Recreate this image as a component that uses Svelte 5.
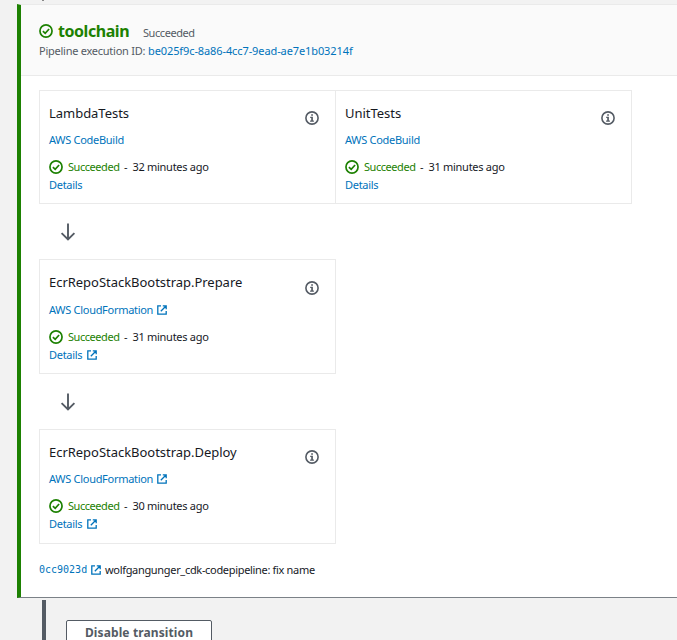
<script>
  const groups = [
    [
      { name: 'LambdaTests', provider: 'AWS CodeBuild', time: '32 minutes ago', external: false },
      { name: 'UnitTests', provider: 'AWS CodeBuild', time: '31 minutes ago', external: false }
    ],
    [{ name: 'EcrRepoStackBootstrap.Prepare', provider: 'AWS CloudFormation', time: '31 minutes ago', external: true, shifted: true }],
    [{ name: 'EcrRepoStackBootstrap.Deploy', provider: 'AWS CloudFormation', time: '30 minutes ago', external: true }]
  ];
</script>

{#snippet check()}
  <svg class="check" viewBox="0 0 14 14" width="14" height="14">
    <circle cx="7" cy="7" r="6.05" />
    <path d="M3.9 7.1 6.2 9.3 10.1 5" />
  </svg>
{/snippet}

{#snippet ext()}
  <svg class="ext" viewBox="0 0 10 10" width="10" height="10">
    <path d="M4 .8H.8v8.4h8.4V6M5.8.8h3.4v3.4M9 1 3.8 6.2" />
  </svg>
{/snippet}

<div class="page">
  <div class="above"><i></i></div>
  <section class="stage">
    <header>
      <div class="heading">
        {@render check()}
        <h1>toolchain</h1>
        <span class="state">Succeeded</span>
      </div>
      <div class="execution">
        <span class="label">Pipeline execution ID:</span>
        <span class="link id">be025f9c-8a86-4cc7-9ead-ae7e1b03214f</span>
      </div>
    </header>
    <div class="body">
      {#each groups as group, i}
        {#if i > 0}
          <div class="arrow">
            <svg viewBox="0 0 16 18" width="16" height="18"><path d="M8 .5v16M1.6 10.1 8 16.4l6.4-6.3" /></svg>
          </div>
        {/if}
        <div class="group" class:later={i > 0}>
          {#each group as action}
            <article class:shifted={action.shifted}>
              <div class="info">
                <h2>{action.name}</h2>
                <div class="row provider"><span class="link">{action.provider}</span>{#if action.external}{@render ext()}{/if}</div>
                <div class="row status">
                  {@render check()}<span class="ok">Succeeded</span><span class="dash">-</span><span class="time">{action.time}</span>
                </div>
                <div class="row details"><span class="link">Details</span>{#if action.external}{@render ext()}{/if}</div>
              </div>
              <svg class="about" viewBox="0 0 14 14" width="14" height="14">
                <circle cx="7" cy="7" r="6.1" />
                <path d="M6.2 3.2h1.7v1.6H6.2zM5.2 5.8h2.7v3.6h1V10.7H5.1V9.4h1.1V7H5.2z" />
              </svg>
            </article>
          {/each}
        </div>
      {/each}
      <div class="commit">
        <span class="hash">0cc9023d</span>{@render ext()}<span class="message">wolfgangunger_cdk-codepipeline: fix name</span>
      </div>
    </div>
  </section>
  <div class="transition">
    <div class="rail"></div>
    <button>Disable transition</button>
  </div>
</div>

<style>
  .page {
    height: 640px;
    overflow: hidden;
    background: #f2f2f2;
    color: #16191f;
    font: 11px/18px "Noto Sans", "Open Sans", sans-serif;
    white-space: nowrap;
  }
  .above { height: 4px; padding-left: 42px; }
  .above i { display: block; width: 2px; height: 1px; background: #888; }
  .stage {
    box-sizing: border-box;
    height: 594px;
    margin-left: 17px;
    border-top: 1px solid #eaeaea;
    border-bottom: 1px solid #7b8187;
    border-left: 4px solid #1d8102;
    background: #fff;
  }
  header {
    box-sizing: border-box;
    height: 71px;
    padding: 15px 18px 0;
    border-bottom: 1px solid #eaeaea;
    background: #fafafa;
  }
  .heading { display: flex; height: 22px; align-items: center; }
  h1 { width: 85px; margin: 0 0 0 5px; color: #1d8102; font-size: 16px; font-weight: 700; line-height: 22px; letter-spacing: -.45px; }
  .state { padding-top: 3px; color: #545b64; letter-spacing: -.43px; }
  .execution { display: flex; color: #545b64; }
  .label { width: 109px; letter-spacing: -.25px; }
  .link { color: #0073bb; }
  .id { letter-spacing: -.1px; }
  .check { flex: none; fill: none; stroke: #1d8102; stroke-width: 1.7; }
  .ext { flex: none; fill: none; stroke: #0073bb; stroke-width: 1.3; }
  .body { padding: 14px 0 0 18px; }
  .group { display: flex; height: 114px; }
  .later { height: 115px; }
  article {
    box-sizing: border-box;
    display: flex;
    justify-content: space-between;
    width: 297px;
    padding: 12px 16px 0 9px;
    border: 1px solid #eaeaea;
  }
  article + article { border-left: 0; width: 296px; }
  h2 { margin: 0; font-size: 13px; font-weight: 400; line-height: 20px; letter-spacing: -.03px; }
  .row { display: flex; align-items: center; height: 18px; letter-spacing: -.29px; }
  .provider { margin-top: 8px; }
  .status { margin-top: 9px; }
  .shifted .provider { margin-top: 9px; }
  .ok { width: 51px; margin-left: 5px; color: #1d8102; letter-spacing: -.45px; }
  .dash { width: 8px; margin-left: 5px; }
  .time { margin-left: .5px; }
  .provider .ext { margin-left: 4px; }
  .details .ext { margin-left: 5px; }
  .about { flex: none; margin-top: 8px; fill: #545b64; }
  .shifted .about { margin-top: 9px; }
  .about circle { fill: none; stroke: #545b64; stroke-width: 1.6; }
  .arrow { box-sizing: border-box; height: 55px; padding: 19px 0 0 21px; }
  .arrow svg { display: block; fill: none; stroke: #545b64; stroke-width: 1.9; }
  .commit { display: flex; align-items: center; height: 18px; margin-top: 17px; }
  .hash { width: 52px; color: #0073bb; font: 10px/18px "DejaVu Sans Mono", monospace; }
  .message { margin-left: 4px; letter-spacing: -.32px; }
  .transition { display: flex; height: 42px; padding-left: 42px; }
  .rail { width: 4px; margin-top: 2px; background: #545b64; }
  button {
    box-sizing: border-box;
    width: 146px;
    height: 30px;
    margin: 22px 0 0 20px;
    padding: 0 0 5px;
    border: 1px solid #545b64;
    border-radius: 2px;
    background: #fff;
    color: #545b64;
    font: 700 12px/18px "Noto Sans", sans-serif;
    letter-spacing: .12px;
  }
</style>
